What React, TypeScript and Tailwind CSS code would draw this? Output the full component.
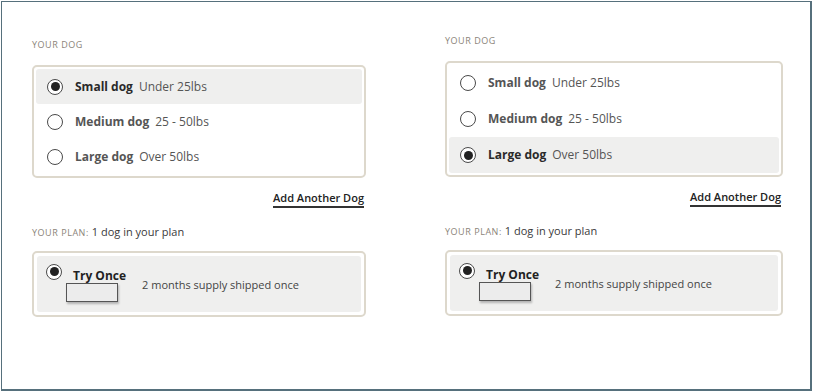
import React from "react";

type Size = { name: string; range: string };

const sizes: Size[] = [
  { name: "Small dog", range: "Under 25lbs" },
  { name: "Medium dog", range: "25 - 50lbs" },
  { name: "Large dog", range: "Over 50lbs" },
];

function Radio({ checked }: { checked: boolean }) {
  return (
    <span className="flex h-[16px] w-[16px] shrink-0 items-center justify-center rounded-full border-[1.5px] border-[#4a4a4a] bg-white">
      {checked && <span className="h-[9px] w-[9px] rounded-full bg-[#222]" />}
    </span>
  );
}

function DogPanel({ selected, top, rowH }: { selected: number; top: string; rowH: string }) {
  return (
    <div className={`flex flex-col ${top}`}>
      <div className="text-[9px] leading-[12px] tracking-[0.06em] text-[#8b8479]">YOUR DOG</div>

      {/* size picker */}
      <div className="mt-[14px] rounded-[5px] border-2 border-[#ddd8cc] p-[2px]">
        {sizes.map((s, i) => (
          <div
            key={s.name}
            className={`flex ${rowH} items-center rounded-[3px] pl-[11px] ${
              i === selected ? "bg-[#efefee]" : ""
            }`}
          >
            <Radio checked={i === selected} />
            <span
              className={`ml-[12px] text-[12px] font-bold ${
                i === selected ? "text-[#2a2a2a]" : "text-[#555]"
              }`}
            >
              {s.name}
            </span>
            <span className="ml-[6px] text-[12px] text-[#555]">{s.range}</span>
          </div>
        ))}
      </div>

      <div className="mt-[13px] flex justify-end pr-[2px]">
        <span className="border-b-2 border-[#333] pb-[1px] text-[11px] font-semibold leading-[14px] text-[#222]">
          Add Another Dog
        </span>
      </div>

      <div className="mt-[16px] flex items-baseline">
        <span className="text-[9px] tracking-[0.06em] text-[#8b8479]">YOUR PLAN:</span>
        <span className="ml-[3px] text-[11px] text-[#3a3a3a]">1 dog in your plan</span>
      </div>

      {/* plan */}
      <div className="mt-[10px] rounded-[5px] border-2 border-[#ddd8cc] p-[3px]">
        <div className="flex h-[56px] items-start rounded-[3px] bg-[#efefee] pl-[9px] pt-[8px]">
          <Radio checked />
          <div className="ml-[4px] mt-[4px] flex flex-col">
            <span className="pl-[7px] text-[12px] font-bold leading-[16px] text-[#222]">Try Once</span>
            <span className="-mt-[1px] h-[19px] w-[52px] border-[1.5px] border-[#555] bg-[#ececec] shadow-[1px_2px_2px_rgba(0,0,0,0.25)]" />
          </div>
          <span className="ml-[16px] mt-[13px] text-[11px] leading-[16px] text-[#444]">
            2 months supply shipped once
          </span>
        </div>
      </div>
    </div>
  );
}

export default function App() {
  return (
    <div className="h-[392px] w-[814px] bg-white pl-[1px] pt-[1px] font-['Open_Sans',sans-serif]">
      <div className="flex h-[390px] w-[811px] border-b-2 border-l border-r-2 border-t border-[#56707c] pl-[30px]">
        <div className="w-[334px]">
          <DogPanel selected={0} top="pt-[37px]" rowH="h-[35px]" />
        </div>
        <div className="ml-[79px] w-[338px]">
          <DogPanel selected={2} top="pt-[33px]" rowH="h-[36px]" />
        </div>
      </div>
    </div>
  );
}
